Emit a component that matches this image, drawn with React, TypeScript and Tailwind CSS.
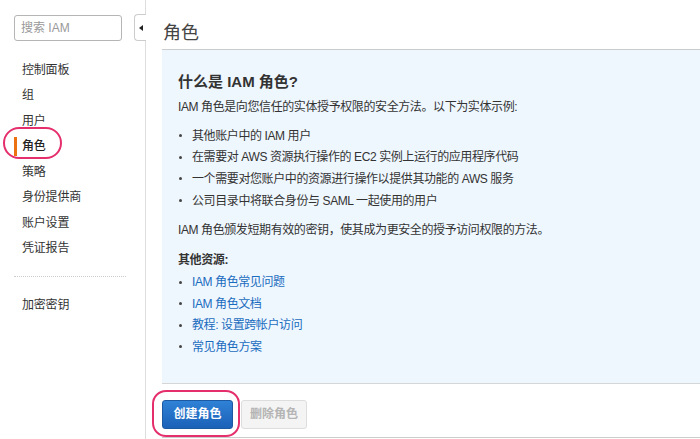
import React from "react";

const font = {
  fontFamily:
    '"Liberation Sans", "Noto Sans CJK SC", Arial, sans-serif',
};

const navItems = ["控制面板", "组", "用户", "角色", "策略", "身份提供商", "账户设置", "凭证报告"];

const bullets = [
  "其他账户中的 IAM 用户",
  "在需要对 AWS 资源执行操作的 EC2 实例上运行的应用程序代码",
  "一个需要对您账户中的资源进行操作以提供其功能的 AWS 服务",
  "公司目录中将联合身份与 SAML 一起使用的用户",
];

const links = ["IAM 角色常见问题", "IAM 角色文档", "教程: 设置跨帐户访问", "常见角色方案"];

export default function App() {
  return (
    <div
      className="relative flex h-[439px] w-[700px] overflow-hidden bg-white text-[#333]"
      style={font}
    >
      {/* Sidebar */}
      <aside className="relative w-[146px] shrink-0 border-r border-[#ddd]">
        <div className="pl-[14px] pt-[15px]">
          <div className="flex h-[26px] w-[108px] items-center rounded-[3px] border border-[#b5b5b5] pl-[6px] text-[12px] text-[#999]">
            搜索 IAM
          </div>
        </div>
        <nav className="mt-[16px] flex flex-col">
          {navItems.map((item) => (
            <div
              key={item}
              className="relative flex h-[25.5px] items-center pl-[22px] text-[12px] tracking-[-0.2px] text-[#333]"
            >
              {item === "角色" && (
                <span className="absolute left-[14px] top-[3px] h-[19px] w-[3px] bg-[#ec7211]" />
              )}
              <span className={item === "角色" ? "font-medium text-[#222]" : ""}>{item}</span>
            </div>
          ))}
        </nav>
        <div className="ml-[14px] mt-[15px] w-[112px] border-t border-dotted border-[#ccc]" />
        <div className="mt-[17px] flex h-[22px] items-center pl-[22px] text-[12px] tracking-[-0.2px]">加密密钥</div>

        {/* collapse tab */}
        <div className="absolute right-[-1px] top-[14px] flex h-[27px] w-[12px] items-center justify-center rounded-l-[4px] border border-r-0 border-[#ccc] bg-white">
          <span className="ml-[1px] h-0 w-0 border-y-[3.5px] border-r-[4px] border-y-transparent border-r-[#222]" />
        </div>
      </aside>

      {/* Main */}
      <main className="flex flex-1 flex-col pl-[16px]">
        <div className="h-[49px] pl-[1px] pt-[22px] text-[18px] leading-[22px] text-[#444]">角色</div>

        <section className="border-y border-t-[#ccc] border-b-[#d6d6d6] bg-[#eff7fe] pb-[25px] pl-[16px] pt-[22px] tracking-[-0.4px]">
          <h2 className="text-[15px] font-bold leading-[20px] tracking-[0px] text-[#333]">什么是 IAM 角色?</h2>
          <p className="mt-[5px] text-[12px] leading-[20px]">
            IAM 角色是向您信任的实体授予权限的安全方法。以下为实体示例:
          </p>
          <ul className="mt-[8px]">
            {bullets.map((b) => (
              <li key={b} className="flex h-[21.6px] items-center text-[12px]">
                <span className="ml-[1px] mr-[10px] h-[3px] w-[3px] rounded-full bg-[#444]" />
                {b}
              </li>
            ))}
          </ul>
          <p className="mt-[9px] text-[12px] leading-[20px]">
            IAM 角色颁发短期有效的密钥，使其成为更安全的授予访问权限的方法。
          </p>
          <p className="mt-[10px] text-[12px] font-bold leading-[20px]">其他资源:</p>
          <ul className="mt-[1px]">
            {links.map((l) => (
              <li key={l} className="flex h-[21.6px] items-center text-[12px]">
                <span className="ml-[1px] mr-[10px] h-[3px] w-[3px] rounded-full bg-[#444]" />
                <a className="text-[#1a6cbf]">{l}</a>
              </li>
            ))}
          </ul>
        </section>

        <div className="mt-[16px] flex gap-[8px]">
          <button className="h-[29px] w-[71px] rounded-[3px] border border-[#1b59a3] bg-gradient-to-b from-[#2f82d6] to-[#1b61b8] text-[12px] font-bold text-white">
            创建角色
          </button>
          <button className="h-[29px] w-[66px] rounded-[3px] border border-[#ddd] bg-[#f4f4f4] text-[12px] font-bold text-[#b5b5b5]">
            删除角色
          </button>
        </div>
        <div className="mt-[8px] border-t border-[#ccc]" />
      </main>

      {/* annotation highlights */}
      <div className="pointer-events-none absolute left-[3px] top-[127px] h-[32px] w-[59px] rounded-full border-[2.5px] border-[#e52f6c]" />
      <div className="pointer-events-none absolute left-[152px] top-[390px] h-[47px] w-[88px] rounded-[14px] border-[2.5px] border-[#e52f6c]" />
    </div>
  );
}
